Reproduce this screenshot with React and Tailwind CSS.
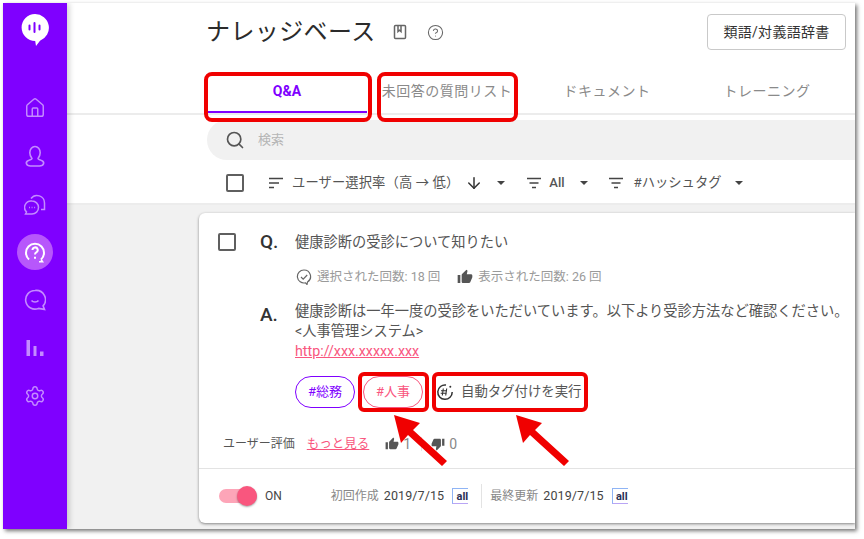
import React from 'react';
import { Home, HelpCircle, Settings, Search, ArrowDown } from 'lucide-react';

const font = 'font-["Roboto","Noto_Sans_CJK_JP",sans-serif]';

const Caret = () => (
  <svg width="8" height="4" viewBox="0 0 8 4" className="text-[#444]"><path d="M0 0h8L4 4z" fill="currentColor" /></svg>
);

const FilterIcon = () => (
  <svg width="16" height="12" viewBox="0 0 16 12" className="text-[#444]">
    <path d="M1 1.500h14M3.500 6h9M6 10.500h4" stroke="currentColor" strokeWidth="1.600" />
  </svg>
);

const SortIcon = () => (
  <svg width="16" height="12" viewBox="0 0 16 12" className="text-[#444]">
    <path d="M1 1.500h14M1 6h10M1 10.500h5" stroke="currentColor" strokeWidth="1.600" />
  </svg>
);

const Checkbox = () => <div className="w-[18px] h-[18px] rounded-[2px] border-2 border-[#5f5f5f]" />;

const ThumbUpSolid = ({ className }) => (
  <svg viewBox="0 0 24 24" className={className} fill="currentColor">
    <path d="M1 21h4V9H1v12zm22-11c0-1.100-.9-2-2-2h-6.310l.95-4.570.03-.32c0-.41-.17-.79-.44-1.060L14.170 1 7.590 7.590C7.220 7.950 7 8.450 7 9v10c0 1.100.9 2 2 2h9c.83 0 1.540-.5 1.840-1.220l3.020-7.050c.09-.23.14-.47.14-.73v-2z" />
  </svg>
);

const ThumbDownSolid = ({ className }) => (
  <svg viewBox="0 0 24 24" className={className} fill="currentColor">
    <path d="M15 3H6c-.83 0-1.540.5-1.840 1.220l-3.020 7.050c-.09.23-.14.47-.14.73v2c0 1.100.9 2 2 2h6.310l-.95 4.570-.03.32c0 .41.17.79.44 1.060L9.830 23l6.590-6.590c.36-.36.58-.86.58-1.410V5c0-1.100-.9-2-2-2zm4 0v12h4V3h-4z" />
  </svg>
);

const AllBadge = () => (
  <div className="w-4 h-4 flex items-center justify-end border-l border-t border-b border-l-[#8fb4f5] border-t-[#8fb4f5] border-b-[#b9a5f5] bg-white text-[11px] leading-none font-bold text-[#2b2f55]">all</div>
);

const SideIcon = ({ children }) => (
  <div className="w-full h-12 flex items-center justify-center text-[#c48bff]">{children}</div>
);

const Sidebar = () => (
  <div className="w-16 shrink-0 bg-[#7f00ff] flex flex-col items-center shadow-[2px_0_6px_rgba(0,0,0,0.2)] z-10">
    <svg width="30" height="34" viewBox="0 0 30 34" className="mt-[10px]">
      <path d="M15 1a13.800 13.800 0 0 1 5 26.700L16 33l-.8-5A13.500 13.500 0 0 1 15 1z" fill="#fff" />
      <path d="M9.500 12.500v4M14.500 10v9M19.500 12.500v4" stroke="#7f00ff" strokeWidth="2" strokeLinecap="round" />
    </svg>
    <div className="flex flex-col w-full mt-[37px]">
      <SideIcon>
        <Home size={22} strokeWidth={1.6} />
      </SideIcon>
      <SideIcon>
        <svg width="22" height="22" viewBox="0 0 22 22" fill="none" stroke="currentColor" strokeWidth="1.600">
          <path d="M8 13.500C6.700 12 5.800 10 5.800 7.800a5.200 6.300 0 0 1 10.400 0c0 2.200-.9 4.200-2.200 5.700 0 1 2 1.300 4 2.200 2.700 1.200 2.200 5.300-2.500 5.300H6.500c-4.700 0-5.200-4.100-2.500-5.300 2-.9 4-1.200 4-2.200z" />
        </svg>
      </SideIcon>
      <SideIcon>
        <svg width="22" height="22" viewBox="0 0 22 22" fill="none" stroke="currentColor" strokeWidth="1.500">
          <path d="M7 5.500A7.500 7.500 0 0 1 20.500 10v6.500H17" />
          <path d="M8 8a6.500 6.500 0 1 1 0 13H1.500l1-2A6.500 6.500 0 0 1 8 8z" />
          <path d="M5 14.500h.9M7.600 14.500h.9M10.200 14.500h.9" strokeWidth="1.300" />
        </svg>
      </SideIcon>
      <div className="w-full h-12 flex items-center justify-center">
        <div className="w-9 h-9 rounded-full bg-[#b757fb] flex items-center justify-center text-white">
          <svg width="22" height="22" viewBox="0 0 22 22" fill="none" stroke="currentColor" strokeWidth="2">
            <path d="M5 18.500a9 9 0 1 1 12 0" />
            <path d="M17 18.500l1.500 2.200H15" strokeWidth="1.600" />
            <path d="M8.500 9a2.600 2.600 0 1 1 3.800 2.300c-.9.500-1.300 1-1.300 2.200" />
            <path d="M11 15.800v2" />
          </svg>
        </div>
      </div>
      <SideIcon>
        <svg width="22" height="22" viewBox="0 0 22 22" fill="none" stroke="currentColor" strokeWidth="1.600">
          <path d="M11 1.500a9.300 9.300 0 1 0 3.500 17.900l6 1-1.400-3.500A9.300 9.300 0 0 0 11 1.500z" />
          <path d="M7.500 11.500c1.500 2 5.500 2 7 0" />
        </svg>
      </SideIcon>
      <SideIcon>
        <svg width="18" height="16" viewBox="0 0 18 16" fill="currentColor">
          <rect x="0.500" y="0" width="3.500" height="16" />
          <rect x="7.500" y="6" width="3" height="10" />
          <rect x="14" y="11.500" width="3.500" height="4.500" />
        </svg>
      </SideIcon>
      <SideIcon>
        <Settings size={22} strokeWidth={1.6} />
      </SideIcon>
    </div>
  </div>
);

const Tab = ({ label, active }) => (
  <div className={`w-40 h-full flex items-start justify-center text-[14px] ${active ? 'text-[#7f00ff] font-bold border-b-2 border-[#7f00ff]' : 'text-[#8a8a8a] tracking-[0.5px]'}`}>
    {label}
  </div>
);

const Header = () => (
  <div className="h-[112px] shrink-0 border-b-2 border-[#ececec] bg-white flex flex-col pl-[140px]">
    <div className="h-[78px] flex items-start">
      <div className="flex items-center mt-[11px] -ml-[1px]">
        <h1 className="text-[24px] leading-[36px] text-[#2b2b2b] font-normal tracking-[0.4px]">ナレッジベース</h1>
        <svg width="14" height="16" viewBox="0 0 14 16" fill="none" stroke="#666" strokeWidth="1.500" className="ml-[17px]">
          <rect x="1.500" y="1.500" width="11" height="13" rx="1" />
          <path d="M5 1.500v6l1.500-1.300L8 7.500v-6" />
        </svg>
        <HelpCircle size={17} strokeWidth={1.5} className="text-[#666] ml-[20px]" />
      </div>
      <button className="ml-auto mr-[9px] mt-[11px] w-[139px] h-[36px] rounded-[4px] border border-[#c9c9c9] text-[14px] tracking-[0.3px] text-[#333] bg-white">
        類語/対義語辞書
      </button>
    </div>
    <div className="flex-1 flex">
      <Tab label="Q&A" active />
      <Tab label="未回答の質問リスト" />
      <Tab label="ドキュメント" />
      <Tab label="トレーニング" />
    </div>
  </div>
);

const Filters = () => (
  <div className="h-[45px] shrink-0 bg-white border-b-2 border-[#ececec] flex items-center pl-[159px] pt-[2px] text-[#555]">
    <Checkbox />
    <div className="ml-[24px]"><SortIcon /></div>
    <span className="ml-[8px] text-[13.3px] tracking-[0.1px]">ユーザー選択率（高 → 低）</span>
    <ArrowDown size={18} strokeWidth={2} className="text-[#333] ml-[6px]" />
    <div className="ml-[14px]"><Caret /></div>
    <div className="ml-[21px]"><FilterIcon /></div>
    <span className="ml-[7px] text-[13px] font-medium">All</span>
    <div className="ml-[15px]"><Caret /></div>
    <div className="ml-[20px]"><FilterIcon /></div>
    <span className="ml-[10px] text-[13.3px]">#ハッシュタグ</span>
    <div className="ml-[13px]"><Caret /></div>
  </div>
);

const Card = () => (
  <div className="mt-[8px] h-[310px] bg-white rounded-l-[6px] shadow-[0_1px_3px_rgba(0,0,0,0.45)] flex flex-col relative">
    <div className="flex-1 pl-[19px] pt-[20px] flex flex-col">
      <div className="flex items-center h-[18px]">
        <Checkbox />
        <span className="ml-[24px] w-[35px] text-[19px] font-medium text-[#333]">Q.</span>
        <span className="text-[14.25px] text-[#555] mt-[1px]">健康診断の受診について知りたい</span>
      </div>
      <div className="flex items-center h-[16px] mt-[18px] ml-[78px] text-[12.5px] text-[#9a9a9a]">
        <svg width="16" height="16" viewBox="0 0 16 16" fill="none" stroke="#666" strokeWidth="1.200">
          <path d="M8 1a6.500 6.500 0 1 0 1.500 12.800L11 15.500l.5-2.500A6.500 6.500 0 0 0 8 1z" />
          <path d="M5 8l2.200 2.200L11.200 6" />
        </svg>
        <span className="ml-[5px]">選択された回数: 18 回</span>
        <ThumbUpSolid className="w-4 h-4 text-[#555] ml-[17px]" />
        <span className="ml-[5px]">表示された回数: 26 回</span>
      </div>
      <div className="flex mt-[16px]">
        <span className="ml-[42px] w-[35px] text-[19px] font-medium text-[#333] leading-[28px]">A.</span>
        <div className="text-[14.25px] leading-[20px] text-[#555] whitespace-nowrap">
          <div>健康診断は一年一度の受診をいただいています。以下より受診方法など確認ください。</div>
          <div>&lt;人事管理システム&gt;</div>
          <a className="text-[#f9567e] underline">http://xxx.xxxxx.xxx</a>
        </div>
      </div>
      <div className="flex items-center mt-[15px] ml-[77px] text-[13px]">
        <span className="w-[60px] h-[32px] rounded-full border border-[#7f00ff] text-[#7f00ff] flex items-center justify-center">#総務</span>
        <span className="ml-[8px] w-[60px] h-[32px] rounded-full border border-[#f9567e] text-[#f9567e] flex items-center justify-center">#人事</span>
        <svg width="18" height="18" viewBox="0 0 18 18" fill="none" stroke="#333" strokeWidth="1.500" className="ml-[13px]">
          <path d="M10 2a7.200 7.200 0 1 0 6.200 7" />
          <path d="M7.300 5.500l-1 7M10.700 5.500l-1 7M5 7.700h6M4.700 10.300h6" strokeWidth="1.100" />
          <circle cx="14.300" cy="3.800" r="1" fill="#333" stroke="none" />
        </svg>
        <span className="ml-[7px] text-[13.4px] text-[#555]">自動タグ付けを実行</span>
      </div>
      <div className="flex items-center mt-[27px] ml-[5px] text-[12px] text-[#555] h-[18px]">
        <span>ユーザー評価</span>
        <a className="ml-[12px] text-[12.5px] text-[#f9567e] underline">もっと見る</a>
        <ThumbUpSolid className="w-[14px] h-[14px] text-[#555] ml-[16px]" />
        <span className="ml-[4px] text-[14px] text-[#888]">1</span>
        <div className="w-px h-[14px] bg-[#e5e5e5] ml-[10px]" />
        <ThumbDownSolid className="w-[14px] h-[14px] text-[#555] ml-[9px]" />
        <span className="ml-[4px] text-[14px] text-[#888]">0</span>
      </div>
    </div>
    <div className="h-[55px] border-t border-[#e3e3e3] flex items-center pl-[20px] text-[12px]">
      <div className="relative w-[38px] h-[14px] rounded-full bg-[#fda5b8]">
        <div className="absolute right-0 top-[-3px] w-5 h-5 rounded-full bg-[#f9567e] shadow-[0_1px_2px_rgba(0,0,0,0.35)]" />
      </div>
      <span className="ml-[8px] text-[#444]">ON</span>
      <span className="ml-[49px] text-[#888]">初回作成</span>
      <span className="ml-[5px] text-[12.5px] text-[#444] tracking-[0.1px]">2019/7/15</span>
      <div className="ml-[8px]"><AllBadge /></div>
      <div className="w-px h-6 bg-[#e3e3e3] ml-[13px]" />
      <span className="ml-[8px] text-[#888]">最終更新</span>
      <span className="ml-[5px] text-[12.5px] text-[#444] tracking-[0.1px]">2019/7/15</span>
      <div className="ml-[8px]"><AllBadge /></div>
    </div>
  </div>
);

const Annotations = () => (
  <>
    <div className="absolute left-[204px] top-[72px] w-[168px] h-[50px] border-[4px] border-[#f00000] rounded-[8px]" />
    <div className="absolute left-[377px] top-[72px] w-[141px] h-[50px] border-[4px] border-[#f00000] rounded-[8px]" />
    <div className="absolute left-[358px] top-[372px] w-[71px] h-[40px] border-[4px] border-[#f00000] rounded-[6px]" />
    <div className="absolute left-[432px] top-[372px] w-[156px] h-[40px] border-[4px] border-[#f00000] rounded-[6px]" />
    <svg className="absolute left-0 top-0" width="864" height="539" viewBox="0 0 864 539" fill="#f00000">
      <path d="M394 415l26 8-7 7 34 31-5 5-34-31-7 8z" />
      <path d="M516 415l26 8-7 7 34 31-5 5-34-31-7 8z" />
    </svg>
  </>
);

export default function App() {
  return (
    <div className={`relative w-[864px] h-[539px] bg-white overflow-hidden ${font}`}>
      <div className="absolute left-[3px] top-[3px] w-[852px] h-[526px] flex bg-[#f1f1f1] shadow-[2px_2px_4px_rgba(0,0,0,0.55)] overflow-hidden">
        <Sidebar />
        <div className="flex-1 min-w-0 flex flex-col">
          <Header />
          <div className="h-[45px] shrink-0 bg-white pt-[5px] pl-[140px]">
            <div className="h-[40px] bg-[#f1f1f1] rounded-l-[20px] flex items-center pl-[18px] text-[13px] text-[#b5b5b5]">
              <Search size={20} strokeWidth={2} className="text-[#555]" />
              <span className="ml-[13px]">検索</span>
            </div>
          </div>
          <Filters />
          <div className="pl-[132px]">
            <Card />
          </div>
        </div>
      </div>
      <Annotations />
    </div>
  );
}
